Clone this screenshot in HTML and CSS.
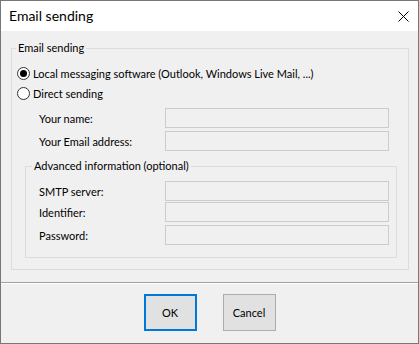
FILE: index.html
```html
<!DOCTYPE html>
<html>
<head>
<meta charset="utf-8">
<link rel="stylesheet" href="styles.css">
</head>
<body>
<div class="window">
  <div class="titlebar">
    <span class="title">Email sending</span>
    <svg class="close" width="11" height="11" viewBox="0 0 11 11"><path d="M0.5 0.5L10.5 10.5M10.5 0.5L0.5 10.5" stroke="#000" stroke-width="1" fill="none"/></svg>
  </div>
  <div class="body">
    <fieldset class="group outer">
      <legend>Email sending</legend>
      <div class="radio first"><span class="dot checked"></span><span>Local messaging software (Outlook, Windows Live Mail, ...)</span></div>
      <div class="radio"><span class="dot"></span><span>Direct sending</span></div>
      <div class="row outer-row r1"><span class="label">Your name:</span><span class="input"></span></div>
      <div class="row outer-row r2"><span class="label">Your Email address:</span><span class="input"></span></div>
      <fieldset class="group inner">
        <legend>Advanced information (optional)</legend>
        <div class="row r3"><span class="label">SMTP server:</span><span class="input"></span></div>
        <div class="row r4"><span class="label">Identifier:</span><span class="input"></span></div>
        <div class="row r5"><span class="label">Password:</span><span class="input"></span></div>
      </fieldset>
    </fieldset>
  </div>
  <div class="footer">
    <button class="btn default">OK</button>
    <button class="btn">Cancel</button>
  </div>
</div>
</body>
</html>
```
FILE: styles.css
```css
html, body {
  margin: 0;
  padding: 0;
}
body {
  width: 419px;
  height: 344px;
  font-family: Lato, "Liberation Sans", sans-serif;
  font-size: 11px;
  color: #000;
}
.window {
  box-sizing: border-box;
  width: 419px;
  height: 344px;
  border: 1px solid #777777;
  background: #f0f0f0;
  display: flex;
  flex-direction: column;
}
.titlebar {
  height: 30px;
  background: #fff;
  display: flex;
  align-items: center;
  justify-content: space-between;
  padding: 0 9px 0 8px;
}
.title {
  font-size: 14px;
  line-height: 16px;
}
.close {
  display: block;
}
.body {
  padding: 0 9px 12px 10px;
  border-bottom: 1px solid #a0a0a0;
  box-shadow: 0 1px 0 #ffffff;
}
.group {
  margin: 0;
  border: 1px solid #dcdcdc;
  padding: 0;
  min-width: 0;
}
.group legend {
  line-height: 16px;
  padding: 0 2px;
  margin-left: 4px;
}
.outer {
  margin-top: 9px;
  padding: 0 0 11px 0;
}
.radio {
  height: 20px;
  display: flex;
  align-items: center;
  padding-left: 5px;
  gap: 3px;
}
.radio.first {
  margin-top: 7px;
}
.dot {
  box-sizing: border-box;
  width: 13px;
  height: 13px;
  border: 1px solid #333333;
  border-radius: 50%;
  background: #fff;
  display: flex;
  align-items: center;
  justify-content: center;
  flex: none;
}
.dot.checked::after {
  content: "";
  width: 7px;
  height: 7px;
  border-radius: 50%;
  background: #000;
}
.row {
  height: 20px;
  display: flex;
  align-items: center;
}
.outer-row {
  margin-left: 27px;
  margin-right: 19px;
}
.label {
  flex: 1;
}
.input {
  box-sizing: border-box;
  width: 224px;
  height: 20px;
  border: 1px solid #cccccc;
  background: #f0f0f0;
}
.r1 { margin-top: 5px; }
.r2 { margin-top: 3px; }
.inner {
  margin: 7px 11px 0 13px;
  padding: 0 7px 12px 13px;
}
.inner legend {
  margin-left: -7px;
}
.r3 { margin-top: 7px; }
.r4 { margin-top: 1px; }
.r5 { margin-top: 3px; }
.footer {
  flex: 1;
  display: flex;
  justify-content: center;
  align-items: flex-start;
  gap: 26px;
  padding-top: 11px;
}
.btn {
  box-sizing: border-box;
  width: 53px;
  height: 37px;
  background: #e1e1e1;
  border: 1px solid #adadad;
  font-family: inherit;
  font-size: 11px;
  color: #000;
  padding: 0;
  margin: 0;
}
.btn.default {
  border: 2px solid #0078d7;
}
```
